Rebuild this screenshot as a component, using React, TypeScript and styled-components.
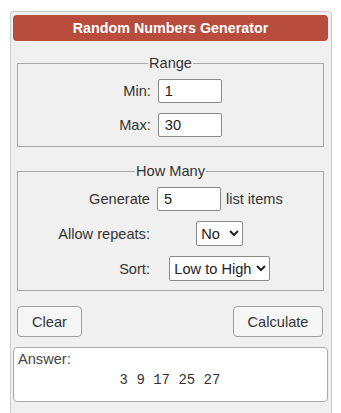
import * as React from 'react';
import styled, { createGlobalStyle } from 'styled-components';

const GlobalStyle = createGlobalStyle`
  body {
    margin: 0;
    background: #ffffff;
    font-family: 'Liberation Sans', Arial, sans-serif;
    color: #333;
  }
`;

const Panel = styled.div`
  margin: 11px 0 0 10px;
  width: 322px;
  border: 1px solid #cccccc;
  border-radius: 3px;
  background: #f0f0f0;
  padding: 3px 3px 20px 2px;
  box-sizing: border-box;
`;

const Title = styled.div`
  height: 26px;
  line-height: 26px;
  border-radius: 4px;
  background: #b84c3d;
  color: #ffffff;
  font-size: 14.3px;
  font-weight: bold;
  text-align: center;
`;

const Group = styled.fieldset<{ $top: number }>`
  margin: ${(p) => p.$top}px 4px 0;
  padding: 7px 0 9px;
  border: 1px solid #a8a8a8;
  min-width: 0;
`;

const Legend = styled.legend`
  margin: 0 auto;
  padding: 0 1px;
  font-size: 14.6px;
  line-height: 17px;
`;

const FormGrid = styled.div`
  display: grid;
  grid-template-columns: auto auto;
  justify-content: center;
  align-items: center;
  column-gap: 7px;
  row-gap: 10px;
`;

const Label = styled.label`
  justify-self: end;
  font-size: 14.6px;
`;

const Control = styled.div<{ $center?: boolean }>`
  display: flex;
  align-items: center;
  gap: 5px;
  justify-self: ${(p) => (p.$center ? 'center' : 'start')};
  font-size: 14.6px;
`;

const TextInput = styled.input`
  width: 64px;
  height: 24px;
  box-sizing: border-box;
  padding: 0 6px;
  border: 1px solid #8a8a8a;
  border-radius: 2px;
  background: #ffffff;
  font-family: inherit;
  font-size: 14.6px;
  color: #222;
`;

const Select = styled.select<{ $width: number }>`
  width: ${(p) => p.$width}px;
  height: 25px;
  box-sizing: border-box;
  border: 1px solid #8a8a8a;
  border-radius: 2px;
  background: #ffffff;
  font-family: inherit;
  font-size: 14.6px;
  color: #222;
`;

const Actions = styled.div`
  display: flex;
  justify-content: space-between;
  margin: 15px 5px 0 4px;
`;

const Button = styled.button<{ $width: number }>`
  width: ${(p) => p.$width}px;
  height: 31px;
  border: 1px solid #a0a0a0;
  border-radius: 4px;
  background: #f6f6f6;
  font-family: inherit;
  font-size: 14.6px;
  color: #333;
`;

const Answer = styled.div`
  margin-top: 10px;
  height: 55px;
  box-sizing: border-box;
  padding: 3px 5px 4px 4px;
  border: 1px solid #aaaaaa;
  border-radius: 4px;
  background: #ffffff;
`;

const AnswerLabel = styled.div`
  font-size: 14.6px;
  line-height: 17px;
  color: #444;
`;

const Numbers = styled.div`
  margin-top: 4px;
  text-align: center;
  font-family: 'Liberation Mono', 'Courier New', monospace;
  font-size: 14px;
  color: #333;
`;

export default function App() {
  return (
    <>
      <GlobalStyle />
      <Panel>
        <Title>Random Numbers Generator</Title>
        <Group $top={14}>
          <Legend>Range</Legend>
          <FormGrid>
            <Label>Min:</Label>
            <Control>
              <TextInput defaultValue="1" />
            </Control>
            <Label>Max:</Label>
            <Control>
              <TextInput defaultValue="30" />
            </Control>
          </FormGrid>
        </Group>
        <Group $top={16}>
          <Legend>How Many</Legend>
          <FormGrid>
            <Label>Generate</Label>
            <Control $center>
              <TextInput defaultValue="5" />
              list items
            </Control>
            <Label>Allow repeats:</Label>
            <Control $center>
              <Select $width={47} defaultValue="no">
                <option value="no">No</option>
                <option value="yes">Yes</option>
              </Select>
            </Control>
            <Label>Sort:</Label>
            <Control $center>
              <Select $width={101} defaultValue="asc">
                <option value="asc">Low to High</option>
                <option value="desc">High to Low</option>
                <option value="none">None</option>
              </Select>
            </Control>
          </FormGrid>
        </Group>
        <Actions>
          <Button $width={65}>Clear</Button>
          <Button $width={90}>Calculate</Button>
        </Actions>
        <Answer>
          <AnswerLabel>Answer:</AnswerLabel>
          <Numbers>3 9 17 25 27</Numbers>
        </Answer>
      </Panel>
    </>
  );
}
